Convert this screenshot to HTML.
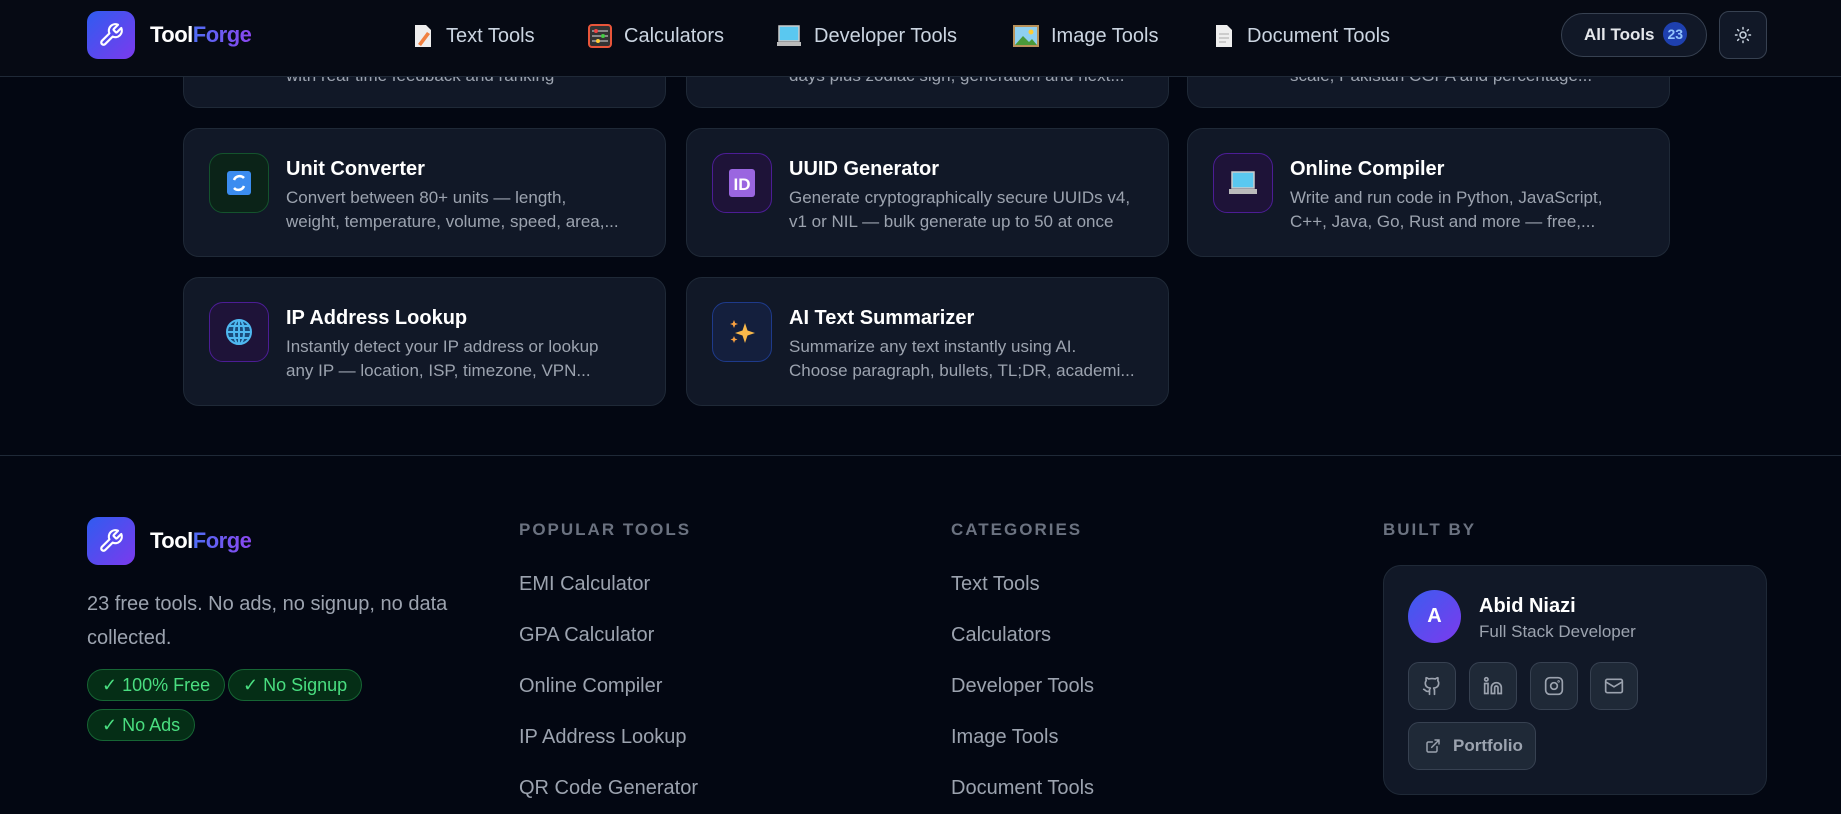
<!DOCTYPE html>
<html><head><meta charset="utf-8"><style>
*{box-sizing:border-box;margin:0;padding:0}
body{width:1841px;height:814px;overflow:hidden;background:#030712;font-family:"Liberation Sans",sans-serif;position:relative;color:#e5e7eb}
.abs{position:absolute}
.hdr{position:absolute;left:0;top:0;width:1841px;height:77px;background:#060a14;border-bottom:1px solid #1f2937;z-index:5}
.logo{position:absolute;width:48px;height:48px;border-radius:11px;background:linear-gradient(135deg,#2f5cf0,#7b3aed);display:flex;align-items:center;justify-content:center}
.brand{position:absolute;font-weight:bold;font-size:22px;color:#fff;letter-spacing:-0.5px}
.brand span{background:linear-gradient(90deg,#4f6df5,#8b47f0);-webkit-background-clip:text;color:transparent}
.nav{position:absolute;top:24px;font-size:20px;color:#cbd5e1;display:flex;align-items:center;gap:12px}
.card{position:absolute;width:483px;height:129px;background:#111827;border:1px solid #1f2937;border-radius:16px}
.ic{position:absolute;left:25px;top:24px;width:60px;height:60px;border-radius:14px;display:flex;align-items:center;justify-content:center;border:1px solid}
.ct{position:absolute;left:102px;top:29px;font-size:20px;font-weight:bold;color:#fff}
.cd{position:absolute;left:102px;top:57px;font-size:17px;line-height:24px;color:#9ca3af;width:370px}
.fh{position:absolute;top:520px;font-size:17px;font-weight:bold;letter-spacing:2px;color:#6b7280}
.fl{position:absolute;font-size:20px;color:#9ca3af}
.badge{position:absolute;height:32px;border-radius:16px;background:#052e16;border:1px solid #166534;color:#4ade80;font-size:18px;padding:0 14px;line-height:30px}
.sb{position:absolute;top:662px;width:48px;height:48px;border-radius:11px;background:#1f2937;border:1px solid #374151;display:flex;align-items:center;justify-content:center}
</style></head><body>
<div class="hdr">
<div class="logo" style="left:87px;top:11px"><svg width="26" height="26" viewBox="0 0 24 24" fill="none" stroke="#fff" stroke-width="2" stroke-linecap="round" stroke-linejoin="round"><path d="M14.7 6.3a1 1 0 0 0 0 1.4l1.6 1.6a1 1 0 0 0 1.4 0l3.77-3.77a6 6 0 0 1-7.94 7.94l-6.91 6.91a2.12 2.12 0 0 1-3-3l6.91-6.91a6 6 0 0 1 7.94-7.94l-3.76 3.76z"/></svg></div>
<div class="brand" style="left:150px;top:22px">Tool<span>Forge</span></div>
<div class="nav" style="left:412px"><svg width="22" height="24"><path d="M3 1h11l5 5v17H3z" fill="#eee"/><path d="M6 20l9-12 3 2-9 12z" fill="#f08040"/></svg>Text Tools</div>
<div class="nav" style="left:588px"><svg width="24" height="24"><rect x="1" y="1" width="22" height="22" rx="3" fill="#333" stroke="#e8553a" stroke-width="2"/><path d="M4 7h16M4 12h16M4 17h16" stroke="#ddd"/><circle cx="8" cy="7" r="2" fill="#e44"/><circle cx="15" cy="12" r="2" fill="#4c4"/><circle cx="10" cy="17" r="2" fill="#fc3"/></svg>Calculators</div>
<div class="nav" style="left:776px"><svg width="26" height="24"><rect x="3" y="2" width="20" height="15" fill="#5ac8f0" stroke="#ccc" stroke-width="1.5"/><rect x="1" y="18" width="24" height="4" fill="#bbb"/></svg>Developer Tools</div>
<div class="nav" style="left:1013px"><svg width="26" height="24"><rect x="1" y="2" width="24" height="20" fill="#8fd0f0" stroke="#b8925a" stroke-width="2"/><path d="M2 21l8-9 6 6 3-3 5 6z" fill="#4a9a3a"/><circle cx="18" cy="8" r="2.5" fill="#fc3"/></svg>Image Tools</div>
<div class="nav" style="left:1213px"><svg width="22" height="24"><path d="M3 1h11l5 5v17H3z" fill="#eee"/><path d="M6 10h10M6 14h10M6 18h7" stroke="#aaa"/></svg>Document Tools</div>
<div class="abs" style="left:1561px;top:13px;width:146px;height:44px;border-radius:22px;background:#111827;border:1px solid #374151;color:#e5e7eb;font-weight:bold;font-size:17px;line-height:42px;padding-left:22px">All Tools <span style="display:inline-block;width:24px;height:24px;border-radius:12px;background:#1e40af;color:#93c5fd;font-size:14px;line-height:24px;text-align:center;margin-left:4px;vertical-align:1px">23</span></div>
<div class="abs" style="left:1719px;top:11px;width:48px;height:48px;border-radius:10px;background:#111827;border:1px solid #374151;display:flex;align-items:center;justify-content:center"><svg width="18" height="18" viewBox="0 0 24 24" fill="none" stroke="#cbd5e1" stroke-width="2" stroke-linecap="round"><circle cx="12" cy="12" r="4"/><path d="M12 2v2M12 20v2M4.9 4.9l1.4 1.4M17.7 17.7l1.4 1.4M2 12h2M20 12h2M4.9 19.1l1.4-1.4M17.7 6.3l1.4-1.4"/></svg></div>
</div>

<div class="card" style="left:183px;top:-21px"><div class="cd" style="top:60px">Test your typing speed and accuracy<br>with real-time feedback and ranking</div></div>
<div class="card" style="left:686px;top:-21px"><div class="cd" style="top:60px">Calculate exact age in years, months,<br>days plus zodiac sign, generation and next...</div></div>
<div class="card" style="left:1187px;top:-21px"><div class="cd" style="top:60px">Convert GPA between 4.0 and other<br>scale, Pakistan CGPA and percentage...</div></div>

<div class="card" style="left:183px;top:128px"><div class="ic" style="background:#0b2318;border-color:#14532d"><svg width="28" height="28"><rect x="2" y="2" width="24" height="24" rx="3" fill="#3b8cf0"/><path d="M9 11a6 6 0 0 1 10-2M19 17a6 6 0 0 1-10 2" stroke="#fff" stroke-width="2.5" fill="none"/></svg></div><div class="ct">Unit Converter</div><div class="cd">Convert between 80+ units — length,<br>weight, temperature, volume, speed, area,...</div></div>
<div class="card" style="left:686px;top:128px"><div class="ic" style="background:#1e1338;border-color:#4c1d95"><svg width="28" height="30"><rect x="1" y="1" width="26" height="28" rx="3" fill="#9a66e0"/><text x="14" y="22" font-family="Liberation Sans" font-weight="bold" font-size="17" fill="#fff" text-anchor="middle">ID</text></svg></div><div class="ct">UUID Generator</div><div class="cd">Generate cryptographically secure UUIDs v4,<br>v1 or NIL — bulk generate up to 50 at once</div></div>
<div class="card" style="left:1187px;top:128px"><div class="ic" style="background:#1e1338;border-color:#4c1d95"><svg width="30" height="28"><rect x="4" y="3" width="22" height="16" fill="#5ac8f0" stroke="#ccc" stroke-width="1.5"/><rect x="1" y="20" width="28" height="5" fill="#bbb"/></svg></div><div class="ct">Online Compiler</div><div class="cd">Write and run code in Python, JavaScript,<br>C++, Java, Go, Rust and more — free,...</div></div>
<div class="card" style="left:183px;top:277px"><div class="ic" style="background:#1e1338;border-color:#4c1d95"><svg width="30" height="30" viewBox="0 0 30 30" fill="none" stroke="#4fb8f0" stroke-width="2"><circle cx="15" cy="15" r="12" fill="#1a4a7a"/><ellipse cx="15" cy="15" rx="5" ry="12"/><path d="M3 15h24M5 9h20M5 21h20M15 3v24"/></svg></div><div class="ct">IP Address Lookup</div><div class="cd">Instantly detect your IP address or lookup<br>any IP — location, ISP, timezone, VPN...</div></div>
<div class="card" style="left:686px;top:277px"><div class="ic" style="background:#141f3d;border-color:#1e3a8a"><svg width="30" height="30"><path d="M18 6l2.5 7.5L28 16l-7.5 2.5L18 26l-2.5-7.5L8 16l7.5-2.5z" fill="#f9b84a"/><path d="M7 3l1.2 3L11 7 8.2 8 7 11 5.8 8 3 7l2.8-1z" fill="#f9a040"/><path d="M7 19l1 2.5 2.5 1-2.5 1L7 26l-1-2.5-2.5-1 2.5-1z" fill="#f9a040"/></svg></div><div class="ct">AI Text Summarizer</div><div class="cd">Summarize any text instantly using AI.<br>Choose paragraph, bullets, TL;DR, academi...</div></div>

<div class="abs" style="left:0;top:455px;width:1841px;height:1px;background:#1f2937"></div>
<div class="logo" style="left:87px;top:517px"><svg width="26" height="26" viewBox="0 0 24 24" fill="none" stroke="#fff" stroke-width="2" stroke-linecap="round" stroke-linejoin="round"><path d="M14.7 6.3a1 1 0 0 0 0 1.4l1.6 1.6a1 1 0 0 0 1.4 0l3.77-3.77a6 6 0 0 1-7.94 7.94l-6.91 6.91a2.12 2.12 0 0 1-3-3l6.91-6.91a6 6 0 0 1 7.94-7.94l-3.76 3.76z"/></svg></div>
<div class="brand" style="left:150px;top:528px">Tool<span>Forge</span></div>
<div class="abs" style="left:87px;top:587px;font-size:20px;line-height:34px;color:#9ca3af;width:400px">23 free tools. No ads, no signup, no data collected.</div>
<div class="badge" style="left:87px;top:669px">✓ 100% Free</div>
<div class="badge" style="left:228px;top:669px">✓ No Signup</div>
<div class="badge" style="left:87px;top:709px">✓ No Ads</div>

<div class="fh" style="left:519px">POPULAR TOOLS</div>
<div class="fl" style="left:519px;top:573px">EMI Calculator</div>
<div class="fl" style="left:519px;top:624px">GPA Calculator</div>
<div class="fl" style="left:519px;top:675px">Online Compiler</div>
<div class="fl" style="left:519px;top:726px">IP Address Lookup</div>
<div class="fl" style="left:519px;top:777px">QR Code Generator</div>
<div class="fh" style="left:951px">CATEGORIES</div>
<div class="fl" style="left:951px;top:573px">Text Tools</div>
<div class="fl" style="left:951px;top:624px">Calculators</div>
<div class="fl" style="left:951px;top:675px">Developer Tools</div>
<div class="fl" style="left:951px;top:726px">Image Tools</div>
<div class="fl" style="left:951px;top:777px">Document Tools</div>
<div class="fh" style="left:1383px">BUILT BY</div>
<div class="abs" style="left:1383px;top:565px;width:384px;height:230px;border-radius:18px;background:#111827;border:1px solid #1f2937"></div>
<div class="abs" style="left:1408px;top:590px;width:53px;height:53px;border-radius:50%;background:linear-gradient(135deg,#3b5cf0,#7c3aed);color:#fff;font-weight:bold;font-size:20px;text-align:center;line-height:53px">A</div>
<div class="abs" style="left:1479px;top:595px;font-size:20px;font-weight:bold;color:#fff">Abid Niazi</div>
<div class="abs" style="left:1479px;top:622px;font-size:17px;color:#9ca3af">Full Stack Developer</div>
<div class="sb" style="left:1408px"><svg width="20" height="20" viewBox="0 0 24 24" fill="none" stroke="#9ca3af" stroke-width="2" stroke-linecap="round" stroke-linejoin="round"><path d="M15 22v-4a4.8 4.8 0 0 0-1-3.5c3 0 6-2 6-5.5.08-1.25-.27-2.48-1-3.5.28-1.15.28-2.35 0-3.5 0 0-1 0-3 1.5-2.64-.5-5.36-.5-8 0C6 2 5 2 5 2c-.3 1.15-.3 2.35 0 3.5A5.4 5.4 0 0 0 4 9c0 3.5 3 5.5 6 5.5-.39.49-.68 1.05-.85 1.65S8.93 17.38 9 18v4"/><path d="M9 18c-4.51 2-5-2-7-2"/></svg></div>
<div class="sb" style="left:1469px"><svg width="20" height="20" viewBox="0 0 24 24" fill="none" stroke="#9ca3af" stroke-width="2"><path d="M16 8a6 6 0 0 1 6 6v7h-4v-7a2 2 0 0 0-4 0v7h-4v-7a6 6 0 0 1 6-6z"/><rect x="2" y="9" width="4" height="12"/><circle cx="4" cy="4" r="2"/></svg></div>
<div class="sb" style="left:1530px"><svg width="20" height="20" viewBox="0 0 24 24" fill="none" stroke="#9ca3af" stroke-width="2"><rect x="2" y="2" width="20" height="20" rx="5"/><circle cx="12" cy="12" r="4"/><circle cx="17.5" cy="6.5" r=".5"/></svg></div>
<div class="sb" style="left:1590px"><svg width="20" height="20" viewBox="0 0 24 24" fill="none" stroke="#9ca3af" stroke-width="2"><rect x="2" y="4" width="20" height="16" rx="2"/><path d="M22 7l-10 6L2 7"/></svg></div>
<div class="abs" style="left:1408px;top:722px;width:128px;height:48px;border-radius:11px;background:#1f2937;border:1px solid #374151;color:#9ca3af;font-weight:bold;font-size:17px;line-height:46px;padding-left:44px"><svg class="abs" style="left:16px;top:15px" width="16" height="16" viewBox="0 0 24 24" fill="none" stroke="#9ca3af" stroke-width="2.2" stroke-linecap="round"><path d="M18 13v6a2 2 0 0 1-2 2H5a2 2 0 0 1-2-2V8a2 2 0 0 1 2-2h6M15 3h6v6M10 14L21 3"/></svg>Portfolio</div>
</body></html>
